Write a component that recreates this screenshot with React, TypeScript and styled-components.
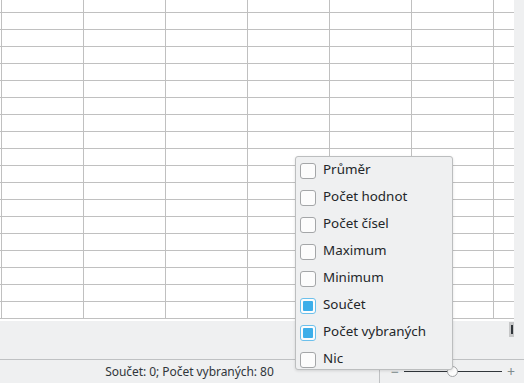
import React from 'react'
import styled, { createGlobalStyle } from 'styled-components'

const GlobalStyle = createGlobalStyle`
	html, body {
		margin: 0;
		padding: 0;
		background: #eff0f1;
	}
	body {
		font-family: 'Noto Sans', 'Open Sans', sans-serif;
		color: #232629;
	}
`

const Window = styled.div`
	position: relative;
	width: 524px;
	height: 383px;
	overflow: hidden;
	display: flex;
	flex-direction: column;
	background: #eff0f1;
`

const Main = styled.div`
	display: flex;
	height: 321px;
`

const Sheet = styled.div`
	width: 514px;
	background: #fff;
	display: flex;
	flex-direction: column;
`

const Row = styled.div<{ $h: number }>`
	display: flex;
	height: ${p => p.$h}px;
	box-sizing: border-box;
	border-bottom: 1px solid #c0c0c0;
	flex-shrink: 0;
`

const Cell = styled.div<{ $w?: number }>`
	box-sizing: border-box;
	${p => (p.$w ? `width: ${p.$w}px; border-right: 1px solid #c0c0c0;` : 'flex: 1;')}
`

const VScroll = styled.div`
	flex: 1;
	background: #eff0f1;
`

const TabBar = styled.div`
	height: 39px;
	display: flex;
	justify-content: flex-end;
	align-items: flex-start;
	padding-right: 10px;
	box-sizing: border-box;
	border-bottom: 1px solid #bfc1c3;
`

const Handle = styled.div`
	width: 5px;
	height: 15px;
	margin-top: 1px;
	background: #c6c7c8;
	display: flex;
	justify-content: center;
	align-items: center;
	&::after {
		content: '';
		width: 2px;
		height: 9px;
		background: #31363b;
	}
`

const StatusBar = styled.div`
	height: 23px;
	display: flex;
	align-items: stretch;
	font-size: 12px;
	color: #31363b;
`

const StatusText = styled.div`
	width: 380px;
	box-sizing: border-box;
	border-right: 1px solid #bfc1c3;
	display: flex;
	align-items: center;
	justify-content: center;
	letter-spacing: -0.05px;
`

const Zoom = styled.div`
	flex: 1;
	display: flex;
	align-items: center;
	padding-left: 10px;
	gap: 4px;
	color: #7f8c8d;
	font-size: 14px;
`

const ZoomSign = styled.span`
	width: 10px;
	text-align: center;
	line-height: 1;
`

const Track = styled.div`
	position: relative;
	width: 98px;
	height: 1px;
	background: #31363b;
`

const Knob = styled.div`
	position: absolute;
	left: 43px;
	top: -5px;
	width: 9px;
	height: 9px;
	border-radius: 50%;
	background: #fcfcfc;
	border: 1px solid #a3a5a7;
`

const Menu = styled.div`
	position: absolute;
	left: 295px;
	top: 156px;
	width: 158px;
	height: 214px;
	box-sizing: border-box;
	overflow: hidden;
	background: #eff0f1;
	border: 1px solid #bcbebf;
	border-radius: 3px;
	box-shadow: 0 1px 3px rgba(0, 0, 0, 0.12);
	display: flex;
	flex-direction: column;
`

const MenuItem = styled.div`
	height: 27px;
	flex-shrink: 0;
	display: flex;
	align-items: center;
	padding-left: 4px;
	gap: 7px;
	font-size: 13.4px;
	color: #232629;
`

const Label = styled.span`
	padding-bottom: 3px;
`

const Box = styled.span<{ $checked?: boolean }>`
	width: 16px;
	height: 16px;
	box-sizing: border-box;
	border-radius: 3px;
	border: 1px solid ${p => (p.$checked ? '#6cc0ec' : '#a4a6a8')};
	background: #fcfcfc;
	padding: 2px;
	display: flex;
	&::after {
		content: '';
		flex: 1;
		border-radius: 1px;
		background: ${p => (p.$checked ? '#3daee9' : 'transparent')};
	}
`

const items: { label: string; checked?: boolean }[] = [
	{ label: 'Průměr' },
	{ label: 'Počet hodnot' },
	{ label: 'Počet čísel' },
	{ label: 'Maximum' },
	{ label: 'Minimum' },
	{ label: 'Součet', checked: true },
	{ label: 'Počet vybraných', checked: true },
	{ label: 'Nic' },
]

const rowHeights = [13, ...Array(18).fill(17)]
const colWidths = [2, 82, 82, 82, 82, 82, 82]

export default function App() {
	return (
		<Window>
			<GlobalStyle />
			<Main>
				<Sheet>
					{rowHeights.map((h, r) => (
						<Row key={r} $h={h}>
							{colWidths.map((w, c) => (
								<Cell key={c} $w={w} />
							))}
							<Cell />
						</Row>
					))}
				</Sheet>
				<VScroll />
			</Main>
			<TabBar>
				<Handle />
			</TabBar>
			<StatusBar>
				<StatusText>Součet: 0; Počet vybraných: 80</StatusText>
				<Zoom>
					<ZoomSign>−</ZoomSign>
					<Track>
						<Knob />
					</Track>
					<ZoomSign>+</ZoomSign>
				</Zoom>
			</StatusBar>
			<Menu>
				{items.map(it => (
					<MenuItem key={it.label}>
						<Box $checked={it.checked} />
						<Label>{it.label}</Label>
					</MenuItem>
				))}
			</Menu>
		</Window>
	)
}
